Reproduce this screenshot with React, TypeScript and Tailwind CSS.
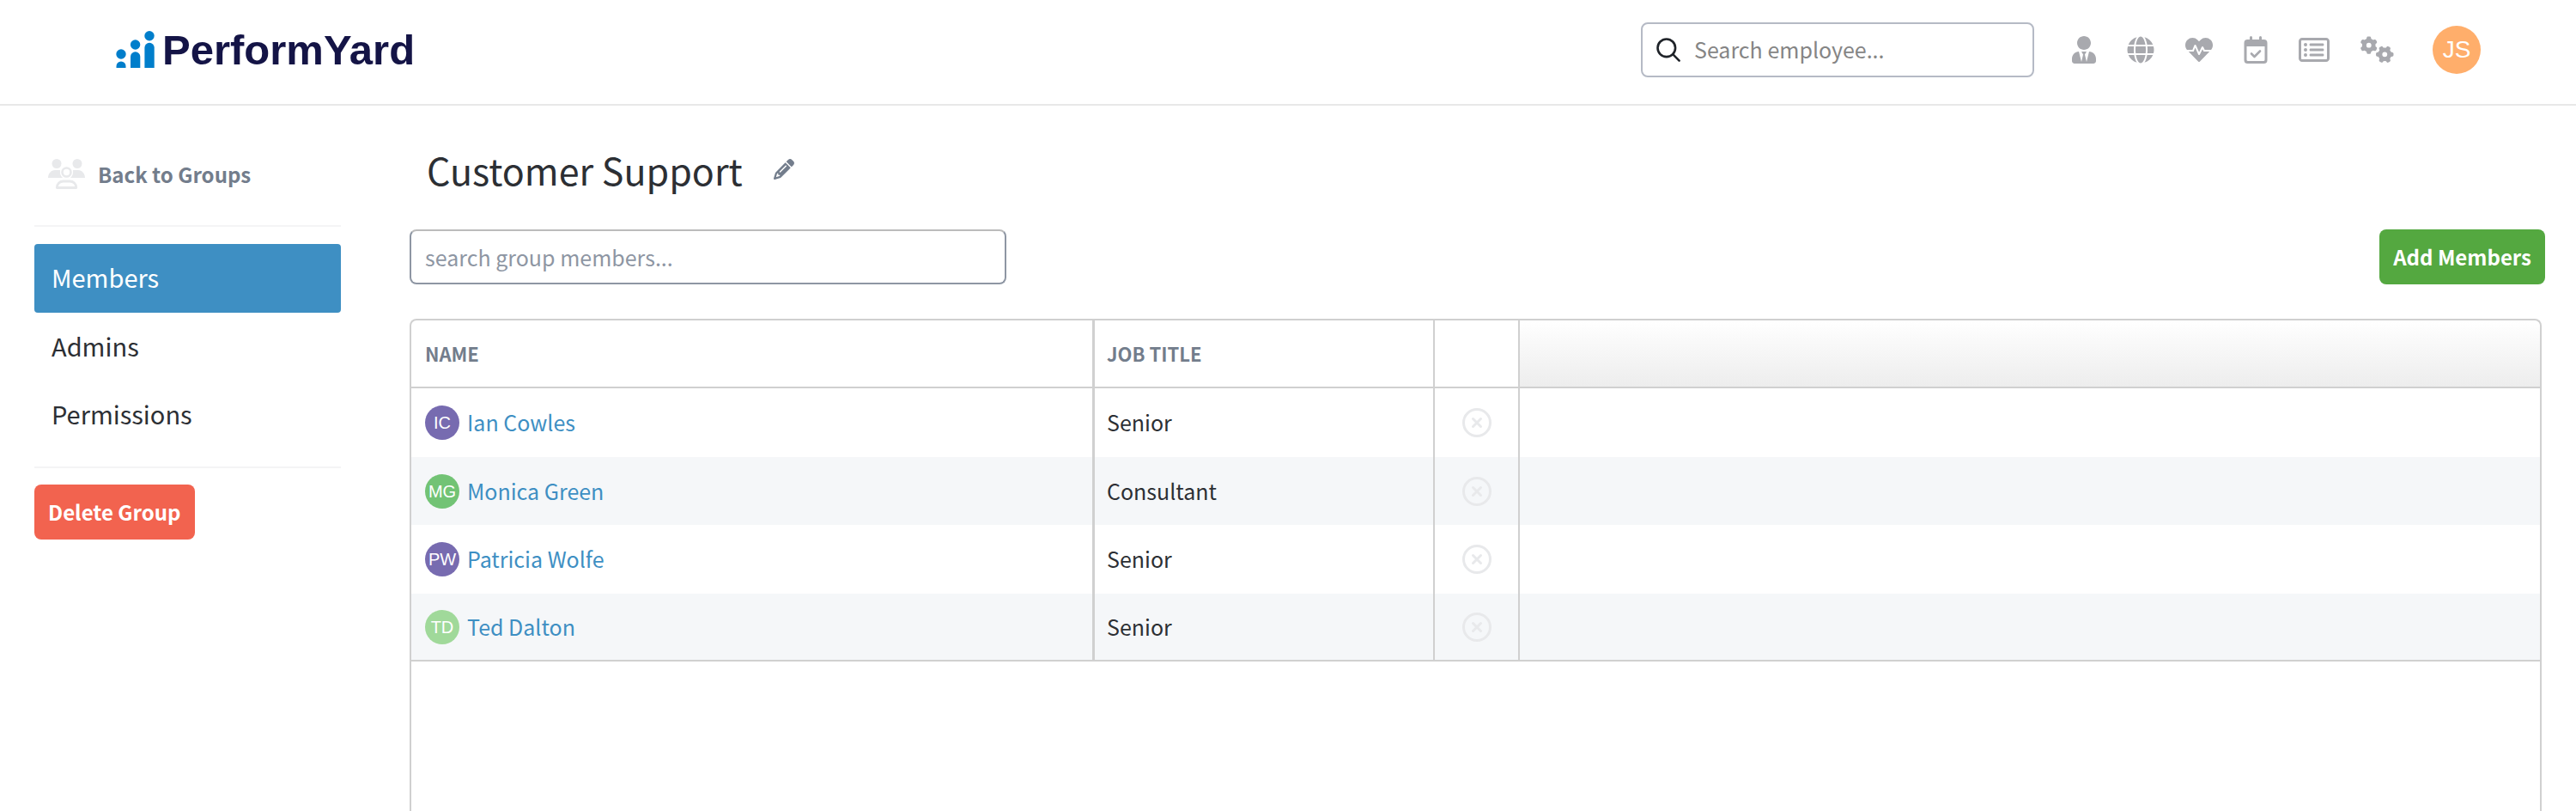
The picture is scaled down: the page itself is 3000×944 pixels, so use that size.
import { FaUserTie, FaGlobe, FaHeartbeat } from "react-icons/fa";
import { FaGears, FaRegRectangleList, FaPencil } from "react-icons/fa6";

type Member = {
  initials: string;
  name: string;
  jobTitle: string;
  color: string;
};

const members: Member[] = [
  { initials: "IC", name: "Ian Cowles", jobTitle: "Senior", color: "bg-[#776bb0]" },
  { initials: "MG", name: "Monica Green", jobTitle: "Consultant", color: "bg-[#72c375]" },
  { initials: "PW", name: "Patricia Wolfe", jobTitle: "Senior", color: "bg-[#776bb0]" },
  { initials: "TD", name: "Ted Dalton", jobTitle: "Senior", color: "bg-[#a0d99a]" },
];

const Logo = () => (
  <a href="#" className="flex items-center gap-2 text-[#141446]">
    <svg width="46" height="44" viewBox="0 0 46 44" fill="#007ecb" aria-hidden="true">
      <circle cx="6" cy="27" r="5.7" />
      <path d="M.5 43v-2a5.5 5.5 0 0 1 11 0v2z" />
      <circle cx="22.6" cy="16" r="5.7" />
      <path d="M17 43V30a5.6 5.6 0 0 1 11.3 0v13z" />
      <circle cx="39" cy="5.7" r="5.7" />
      <path d="M33.4 43V19.5a5.6 5.6 0 0 1 11.3 0V43z" />
    </svg>
    <span className="font-['Liberation_Sans',sans-serif] text-[49px] leading-[56px] font-bold">
      PerformYard
    </span>
  </a>
);

const SearchIcon = () => (
  <svg
    width="28"
    height="28"
    viewBox="0 0 28 28"
    fill="none"
    stroke="#1f2329"
    strokeWidth="2.6"
    strokeLinecap="round"
    aria-hidden="true"
  >
    <circle cx="11.8" cy="11.8" r="10.3" />
    <path d="m19.2 19.2 7.4 7.4" />
  </svg>
);

const CalendarCheck = () => (
  <svg width="28" height="32" viewBox="0 0 28 32" aria-hidden="true">
    <path
      fill="currentColor"
      fillRule="evenodd"
      d="M7 1.5a1.5 1.5 0 0 1 3 0V4h8V1.5a1.5 1.5 0 0 1 3 0V4h2.5a4 4 0 0 1 4 4v20a4 4 0 0 1-4 4h-19a4 4 0 0 1-4-4V8a4 4 0 0 1 4-4H7zM3.5 12v15.5A1.5 1.5 0 0 0 5 29h18a1.5 1.5 0 0 0 1.5-1.5V12z"
    />
    <path
      d="m9 20.5 3.5 3.5 6.5-6.5"
      fill="none"
      stroke="currentColor"
      strokeWidth="2.6"
      strokeLinecap="round"
      strokeLinejoin="round"
    />
  </svg>
);

const GroupIcon = () => (
  <svg width="44" height="36" viewBox="0 0 44 36" fill="#e8e9eb" aria-hidden="true">
    <circle cx="10" cy="5.5" r="5.5" />
    <circle cx="34" cy="5.5" r="5.5" />
    <path d="M0 22c0-5 3.5-9 8-9h4.5c1 0 1.500.2 1.500.2-.6 3.6.6 6.6 3 8.800H0z" />
    <path d="M43 22c0-5-3.5-9-8-9h-4.500c-1 0-1.500.2-1.500.2.6 3.600-.6 6.600-3 8.800h17z" />
    <circle cx="21.5" cy="15.5" r="5" fill="none" stroke="#e8e9eb" strokeWidth="2.6" />
    <path
      d="M10.3 33.5c0-4.5 3.4-7.5 7.5-7.5h7.5c4 0 7.5 3 7.5 7.5z"
      fill="none"
      stroke="#e8e9eb"
      strokeWidth="2.8"
      strokeLinejoin="round"
    />
  </svg>
);

const RemoveIcon = () => (
  <svg width="34" height="36" viewBox="0 0 34 36" fill="none" stroke="#e8e9eb" strokeLinecap="round" aria-hidden="true">
    <circle cx="17" cy="18" r="15.5" strokeWidth="3" />
    <path d="m12.5 13.5 9 9m0-9-9 9" strokeWidth="3" />
  </svg>
);

const Header = () => (
  <header className="flex h-[123px] items-center border-b-2 border-[#e8e8e8] pr-[111px] pb-1.5 pl-[135px]">
    <Logo />
    <label className="ml-auto flex h-16 w-[458px] items-center gap-4 rounded-lg border-2 border-[#b5bac5] pl-4">
      <SearchIcon />
      <input
        type="text"
        aria-label="Search employee"
        placeholder="Search employee..."
        className="min-w-0 flex-1 text-[25px] outline-none placeholder:text-[#858585]"
      />
    </label>
    <nav className="ml-11 flex items-center gap-9 text-[#a8a9ae]">
      <button aria-label="Profile">
        <FaUserTie className="h-8 w-7" />
      </button>
      <button aria-label="Company">
        <FaGlobe size={32} />
      </button>
      <button aria-label="Feedback">
        <FaHeartbeat size={32} />
      </button>
      <button aria-label="Calendar">
        <CalendarCheck />
      </button>
      <button aria-label="Forms">
        <FaRegRectangleList size={36} />
      </button>
      <button aria-label="Settings">
        <FaGears size={39} />
      </button>
    </nav>
    <button className="ml-[45px] size-14 rounded-full bg-[#ffae6b] font-['Liberation_Sans',sans-serif] text-[28px] text-white">
      JS
    </button>
  </header>
);

const Sidebar = () => (
  <aside className="w-[357px] shrink-0">
    <a href="#" className="flex h-20 items-center gap-3.5 pl-4 text-2xl font-bold text-[#737d8c]">
      <GroupIcon />
      Back to Groups
    </a>
    <nav className="mt-[19px] border-y-2 border-[#f4f4f5] py-5 text-[29px] text-[#2c2f34] *:flex *:h-20 *:items-center *:pb-0.5 *:pl-5 *:even:h-[79px]">
      <a href="#" className="rounded bg-[#3e8fc3] text-white">
        Members
      </a>
      <a href="#">Admins</a>
      <a href="#">Permissions</a>
    </nav>
    <button className="mt-[19px] h-16 rounded-lg bg-[#f2634f] px-4 text-2xl font-bold text-white">
      Delete Group
    </button>
  </aside>
);

const MembersTable = () => (
  <div className="mt-10 mr-1 flex-1 rounded-t-lg border-2 border-b-0 border-[#d0d0d0]">
    <table className="w-full table-fixed border-separate border-spacing-0 text-left text-[25px] text-[#2c2f34]">
      <colgroup>
        <col className="w-[796px]" />
        <col className="w-[396px]" />
        <col className="w-[99px]" />
        <col />
      </colgroup>
      <thead>
        <tr className="h-[79px] text-[22px] text-[#737d8c] *:border-b-2 *:border-[#d0d0d0]">
          <th className="border-r-3 px-4 font-bold">NAME</th>
          <th className="border-r-2 px-3.5 font-bold">JOB TITLE</th>
          <td className="border-r-2"></td>
          <td className="rounded-tr-lg bg-linear-to-b from-white to-[#ededed]"></td>
        </tr>
      </thead>
      <tbody>
        {members.map((member) => (
          <tr
            key={member.name}
            className="h-20 *:border-[#d0d0d0] even:h-[79px] even:bg-[#f5f7f9] last:*:border-b-2"
          >
            <td className="border-r-3 px-4">
              <a href="#" className="flex items-center gap-[9px] text-[#3e8fc3]">
                <span
                  className={`flex size-10 items-center justify-center rounded-full font-['Liberation_Sans',sans-serif] text-xl text-white ${member.color}`}
                >
                  {member.initials}
                </span>
                {member.name}
              </a>
            </td>
            <td className="border-r-2 px-3.5">{member.jobTitle}</td>
            <td className="border-r-2">
              <button aria-label={`Remove ${member.name}`} className="mx-auto block">
                <RemoveIcon />
              </button>
            </td>
            <td></td>
          </tr>
        ))}
      </tbody>
    </table>
  </div>
);

export default function App() {
  return (
    <div className="flex min-h-screen flex-col bg-white font-['Noto_Sans_CJK_SC',sans-serif]">
      <Header />
      <div className="flex flex-1 gap-20 pt-10 pr-9 pl-10">
        <Sidebar />
        <main className="flex flex-1 flex-col">
          <div className="flex h-[72px] items-center gap-9 pb-1 pl-5">
            <h1 className="text-[43px] text-[#2c2f34]">Customer Support</h1>
            <button aria-label="Rename group">
              <FaPencil size={24} className="text-[#737d8c]" />
            </button>
          </div>
          <div className="mt-8 flex justify-between">
            <input
              type="text"
              aria-label="Search group members"
              placeholder="search group members..."
              className="h-16 w-[695px] rounded-lg border-2 border-[#8e96a3] border-t-[#bbbbbb] px-4 text-[25px] outline-none placeholder:text-[#8e96a3]"
            />
            <button className="h-16 rounded-lg bg-[#54a840] px-4 text-2xl font-bold text-white">
              Add Members
            </button>
          </div>
          <MembersTable />
        </main>
      </div>
    </div>
  );
}
